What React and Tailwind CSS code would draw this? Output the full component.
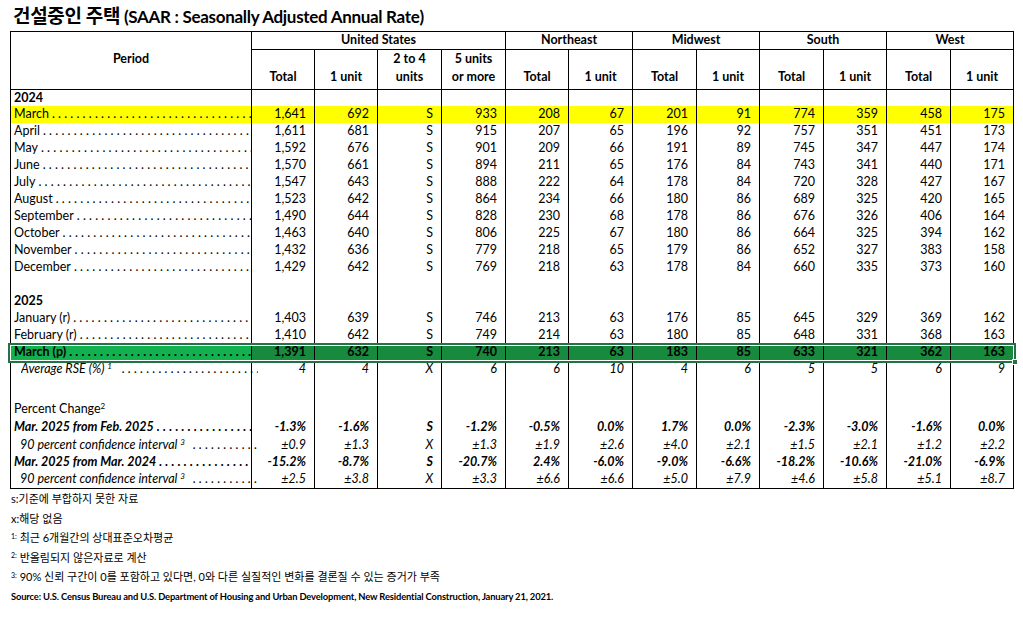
import React from "react";

const COLS = [63, 63, 64, 64, 63, 64, 64, 63, 64, 63, 64, 63];

const rows2024 = [
  ["March", "1,641", "692", "S", "933", "208", "67", "201", "91", "774", "359", "458", "175"],
  ["April", "1,611", "681", "S", "915", "207", "65", "196", "92", "757", "351", "451", "173"],
  ["May", "1,592", "676", "S", "901", "209", "66", "191", "89", "745", "347", "447", "174"],
  ["June", "1,570", "661", "S", "894", "211", "65", "176", "84", "743", "341", "440", "171"],
  ["July", "1,547", "643", "S", "888", "222", "64", "178", "84", "720", "328", "427", "167"],
  ["August", "1,523", "642", "S", "864", "234", "66", "180", "86", "689", "325", "420", "165"],
  ["September", "1,490", "644", "S", "828", "230", "68", "178", "86", "676", "326", "406", "164"],
  ["October", "1,463", "640", "S", "806", "225", "67", "180", "86", "664", "325", "394", "162"],
  ["November", "1,432", "636", "S", "779", "218", "65", "179", "86", "652", "327", "383", "158"],
  ["December", "1,429", "642", "S", "769", "218", "63", "178", "84", "660", "335", "373", "160"],
];

const rows2025 = [
  ["January (r)", "1,403", "639", "S", "746", "213", "63", "176", "85", "645", "329", "369", "162"],
  ["February (r)", "1,410", "642", "S", "749", "214", "63", "180", "85", "648", "331", "368", "163"],
];

const marchP = ["March (p)", "1,391", "632", "S", "740", "213", "63", "183", "85", "633", "321", "362", "163"];
const rse = ["4", "4", "X", "6", "6", "10", "4", "6", "5", "5", "6", "9"];

const changeRows = [
  {
    label: "Mar. 2025 from Feb. 2025",
    vals: ["-1.3%", "-1.6%", "S", "-1.2%", "-0.5%", "0.0%", "1.7%", "0.0%", "-2.3%", "-3.0%", "-1.6%", "0.0%"],
    ci: ["±0.9", "±1.3", "X", "±1.3", "±1.9", "±2.6", "±4.0", "±2.1", "±1.5", "±2.1", "±1.2", "±2.2"],
  },
  {
    label: "Mar. 2025 from Mar. 2024",
    vals: ["-15.2%", "-8.7%", "S", "-20.7%", "2.4%", "-6.0%", "-9.0%", "-6.6%", "-18.2%", "-10.6%", "-21.0%", "-6.9%"],
    ci: ["±2.5", "±3.8", "X", "±3.3", "±6.6", "±6.6", "±5.0", "±7.9", "±4.6", "±5.8", "±5.1", "±8.7"],
  },
];

const DOTS = ".".repeat(80);

function Leader({ children, gap = "ml-[3px]" }) {
  return (
    <div className="flex items-center whitespace-nowrap overflow-hidden w-[237px]">
      <span className="shrink-0">{children}</span>
      <span className={`${gap} flex-1 min-w-0 overflow-hidden tracking-[3.2px]`}>{DOTS}</span>
    </div>
  );
}

function DataCells({ vals, className = "" }) {
  return vals.map((v, i) => (
    <td key={i} className={`border-x border-black text-right pr-2 whitespace-nowrap ${className}`}>
      {v}
    </td>
  ));
}

function Blank({ h = "h-[17px]" }) {
  return (
    <tr className={h}>
      <td className="border-x border-black" />
      {COLS.map((_, i) => (
        <td key={i} className="border-x border-black" />
      ))}
    </tr>
  );
}

export default function App() {
  return (
    <div className="w-[1023px] h-[617px] bg-white text-black font-['Lato','Noto_Sans_CJK_KR',sans-serif] overflow-hidden">
      <h1 className="h-[31px] pl-[13px] pt-[3px] text-[17px] font-bold leading-[24px] tracking-[-0.3px]">
        <span className="font-['Noto_Sans_CJK_KR',sans-serif] text-[19px]">건설중인 주택</span> (SAAR : Seasonally Adjusted Annual Rate)
      </h1>

      <div className="ml-[10px]">
        <table className="table-fixed w-[1003px] border-collapse border border-black text-[12.5px] leading-none">
          <colgroup>
            <col className="w-[241px]" />
            {COLS.map((w, i) => (
              <col key={i} style={{ width: w }} />
            ))}
          </colgroup>
          <thead className="font-bold">
            <tr className="h-[18px]">
              <th rowSpan={2} className="border border-black align-middle text-center font-bold pb-[3px]">
                Period
              </th>
              <th colSpan={4} className="border border-black text-center">United States</th>
              <th colSpan={2} className="border border-black text-center">Northeast</th>
              <th colSpan={2} className="border border-black text-center">Midwest</th>
              <th colSpan={2} className="border border-black text-center">South</th>
              <th colSpan={2} className="border border-black text-center">West</th>
            </tr>
            <tr className="h-[37px]">
              {["Total", "1 unit", "2 to 4|units", "5 units|or more", "Total", "1 unit", "Total", "1 unit", "Total", "1 unit", "Total", "1 unit"].map((t, i) => (
                <th key={i} className="border border-black text-center align-bottom pb-[3px] leading-[18px] whitespace-nowrap">
                  {t.split("|").map((p, j) => (
                    <div key={j}>{p}</div>
                  ))}
                </th>
              ))}
            </tr>
          </thead>
          <tbody>
            <tr className="h-[16px]">
              <td className="border-x border-black pl-[3px] font-bold">2024</td>
              {COLS.map((_, i) => (
                <td key={i} className="border-x border-black" />
              ))}
            </tr>
            {rows2024.map((r, idx) => (
              <tr key={r[0]} className={`h-[17px] ${idx === 0 ? "bg-[#ffff00]" : ""}`}>
                <td className="border-x border-black pl-[3px]">
                  <Leader>{r[0]}</Leader>
                </td>
                <DataCells vals={r.slice(1)} />
              </tr>
            ))}
            <Blank />
            <tr className="h-[17px]">
              <td className="border-x border-black pl-[3px] font-bold">2025</td>
              {COLS.map((_, i) => (
                <td key={i} className="border-x border-black" />
              ))}
            </tr>
            {rows2025.map((r) => (
              <tr key={r[0]} className="h-[17px]">
                <td className="border-x border-black pl-[3px]">
                  <Leader>{r[0]}</Leader>
                </td>
                <DataCells vals={r.slice(1)} />
              </tr>
            ))}
            <tr className="h-[17px] font-bold bg-[#178a3e]">
              <td className="relative border-x border-black pl-[3px] bg-[#12b04f]">
                <Leader>{marchP[0]}</Leader>
                <div className="absolute -left-[3px] -top-[1px] w-[1008px] h-[20px] border-2 border-[#217346] shadow-[inset_0_0_0_1px_#ffffff] pointer-events-none">
                  <div className="absolute -right-[4px] -bottom-[4px] w-[6px] h-[6px] bg-[#217346] border border-white" />
                </div>
              </td>
              <DataCells vals={marchP.slice(1)} />
            </tr>
            <tr className="h-[17px] italic">
              <td className="border-x border-black pl-[10px]">
                <Leader gap="ml-[10px]">
                  Average RSE (%) <sup className="text-[8px]">1</sup>
                </Leader>
              </td>
              <DataCells vals={rse} />
            </tr>
            <Blank h="h-[23px]" />
            <tr className="h-[18px]">
              <td className="border-x border-black pl-[3px]">
                Percent Change<sup className="text-[8px]">2</sup>
              </td>
              {COLS.map((_, i) => (
                <td key={i} className="border-x border-black" />
              ))}
            </tr>
            {changeRows.map((c) => (
              <React.Fragment key={c.label}>
                <tr className="h-[17.5px] font-bold italic">
                  <td className="border-x border-black pl-[3px]">
                    <Leader>{c.label}</Leader>
                  </td>
                  <DataCells vals={c.vals} />
                </tr>
                <tr className="h-[17.5px] italic">
                  <td className="border-x border-black pl-[9px]">
                    <Leader gap="ml-[8px]">
                      90 percent confidence interval <sup className="text-[8px]">3</sup>
                    </Leader>
                  </td>
                  <DataCells vals={c.ci} />
                </tr>
              </React.Fragment>
            ))}
          </tbody>
        </table>
      </div>

      <div className="pl-[11px] text-[11px] font-['Lato','Noto_Sans_CJK_KR',sans-serif]">
        <p className="h-[19.6px] leading-[19.6px]">s:기준에 부합하지 못한 자료</p>
        <p className="h-[19.6px] leading-[19.6px]">x:해당 없음</p>
        <p className="h-[19.6px] leading-[19.6px]">
          <sup className="text-[7px]">1:</sup> 최근 6개월간의 상대표준오차평균
        </p>
        <p className="h-[19.6px] leading-[19.6px]">
          <sup className="text-[7px]">2:</sup> 반올림되지 않은자료로 계산
        </p>
        <p className="h-[19.6px] leading-[19.6px]">
          <sup className="text-[7px]">3:</sup> 90% 신뢰 구간이 0를 포함하고 있다면, 0와 다른 실질적인 변화를 결론질 수 있는 증거가 부족
        </p>
        <p className="h-[19.6px] leading-[19.6px] text-[9.4px] font-bold tracking-[-0.15px]">
          Source: U.S. Census Bureau and U.S. Department of Housing and Urban Development, New Residential Construction, January 21, 2021.
        </p>
      </div>
    </div>
  );
}
